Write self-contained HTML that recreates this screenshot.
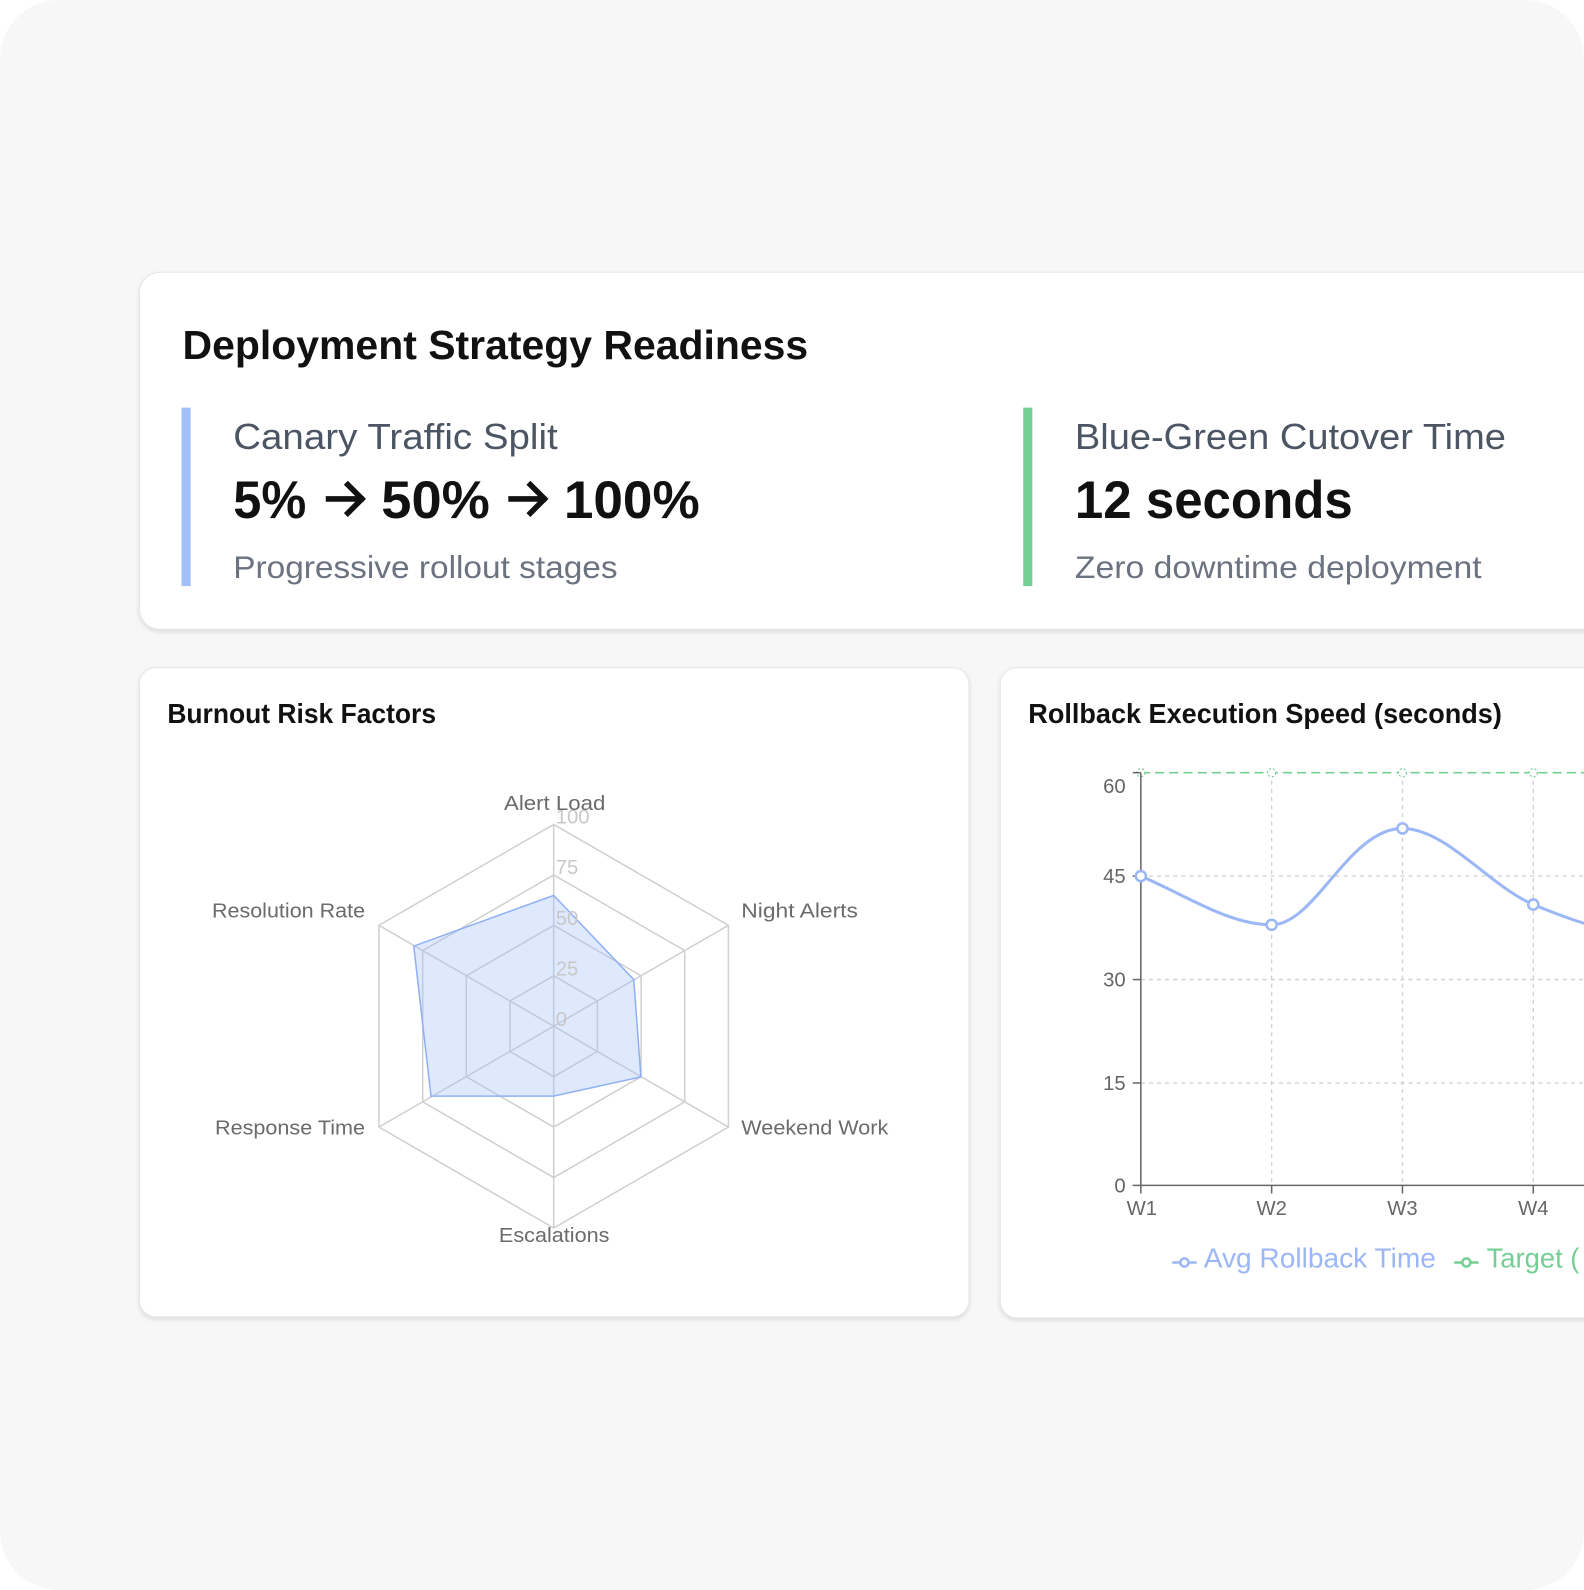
<!DOCTYPE html>
<html><head><meta charset="utf-8"><style>
html,body{margin:0;padding:0;background:#fff;width:1584px;height:1590px;overflow:hidden}
svg{display:block}
text{font-family:"Liberation Sans",sans-serif}
</style></head><body>
<svg width="1584" height="1590" viewBox="0 0 1562 1568" preserveAspectRatio="none" xmlns="http://www.w3.org/2000/svg">
<defs>
<clipPath id="frame"><rect x="0" y="0" width="1562" height="1568" rx="58"/></clipPath>
<filter id="sh" x="-5%" y="-10%" width="110%" height="125%"><feDropShadow dx="0" dy="2" stdDeviation="2" flood-color="#000" flood-opacity="0.12"/></filter>
</defs>
<g clip-path="url(#frame)">
<rect x="0" y="0" width="1562" height="1568" fill="#f7f7f7"/>
<rect x="137.5" y="268.5" width="1480" height="352" rx="20" fill="#fff" stroke="#e6e6e6" filter="url(#sh)"/>
<text x="180" y="354" font-size="40" font-weight="bold" fill="#111" textLength="617" lengthAdjust="spacingAndGlyphs">Deployment Strategy Readiness</text>
<rect x="179" y="402" width="9" height="176" fill="#a3bffa"/>
<text x="230" y="443" font-size="36" fill="#4b5563" textLength="320" lengthAdjust="spacingAndGlyphs">Canary Traffic Split</text>
<g font-size="52" font-weight="bold" fill="#111">
<text x="230" y="511" textLength="72" lengthAdjust="spacingAndGlyphs">5%</text>
<text x="376" y="511" textLength="107" lengthAdjust="spacingAndGlyphs">50%</text>
<text x="556" y="511" textLength="134" lengthAdjust="spacingAndGlyphs">100%</text>
</g>
<g fill="none" stroke="#111" stroke-width="5.5" stroke-linecap="square">
<path d="M324,492 H356 M343,478 L357,492 L343,506"/>
<path d="M504,492 H536 M523,478 L537,492 L523,506"/>
</g>
<text x="230" y="570" font-size="31" fill="#6b7280" textLength="379" lengthAdjust="spacingAndGlyphs">Progressive rollout stages</text>
<rect x="1009" y="402" width="9" height="176" fill="#74cf94"/>
<text x="1060" y="443" font-size="36" fill="#4b5563" textLength="425" lengthAdjust="spacingAndGlyphs">Blue-Green Cutover Time</text>
<text x="1060" y="511" font-size="52" font-weight="bold" fill="#111" textLength="274" lengthAdjust="spacingAndGlyphs">12 seconds</text>
<text x="1060" y="570" font-size="31" fill="#6b7280" textLength="401" lengthAdjust="spacingAndGlyphs">Zero downtime deployment</text>

<rect x="137.5" y="658.5" width="818" height="640" rx="16" fill="#fff" stroke="#e6e6e6" filter="url(#sh)"/>
<text x="165" y="713" font-size="27" font-weight="bold" fill="#111" textLength="265" lengthAdjust="spacingAndGlyphs">Burnout Risk Factors</text>
<g fill="none" stroke="#d0d0d0" stroke-width="1.5">
<polygon points="546,813 718.3,912.5 718.3,1111.5 546,1211 373.7,1111.5 373.7,912.5"/>
<polygon points="546,862.8 675.2,937.4 675.2,1086.6 546,1161.3 416.8,1086.6 416.8,937.4"/>
<polygon points="546,912.5 632.2,962.3 632.2,1061.8 546,1111.5 459.8,1061.8 459.8,962.3"/>
<polygon points="546,962.3 589.1,987.1 589.1,1036.9 546,1061.8 502.9,1036.9 502.9,987.1"/>
<line x1="546" y1="1012" x2="546" y2="813"/><line x1="546" y1="1012" x2="718.3" y2="912.5"/>
<line x1="546" y1="1012" x2="718.3" y2="1111.5"/><line x1="546" y1="1012" x2="546" y2="1211"/>
<line x1="546" y1="1012" x2="373.7" y2="1111.5"/><line x1="546" y1="1012" x2="373.7" y2="912.5"/>
</g>
<polygon points="546,883 625,966 632,1062 546,1081 425,1081 408,933" fill="#a3bffa" fill-opacity="0.35" stroke="#8fb0f5" stroke-width="1.5"/>
<g font-size="20" fill="#c8c8c8">
<text x="548" y="812">100</text><text x="548" y="862">75</text><text x="548" y="912">50</text><text x="548" y="962">25</text><text x="548" y="1012">0</text>
</g>
<g font-size="20" fill="#6b6b6b">
<text x="497" y="799" textLength="100" lengthAdjust="spacingAndGlyphs">Alert Load</text>
<text x="731" y="905" textLength="115" lengthAdjust="spacingAndGlyphs">Night Alerts</text>
<text x="731" y="1119" textLength="145" lengthAdjust="spacingAndGlyphs">Weekend Work</text>
<text x="492" y="1225" textLength="109" lengthAdjust="spacingAndGlyphs">Escalations</text>
<text x="212" y="1119" textLength="148" lengthAdjust="spacingAndGlyphs">Response Time</text>
<text x="209" y="905" textLength="151" lengthAdjust="spacingAndGlyphs">Resolution Rate</text>
</g>

<rect x="986.5" y="658.5" width="700" height="641" rx="16" fill="#fff" stroke="#e6e6e6" filter="url(#sh)"/>
<text x="1014" y="713" font-size="27" font-weight="bold" fill="#111" textLength="467" lengthAdjust="spacingAndGlyphs">Rollback Execution Speed (seconds)</text>
<g stroke="#cfcfcf" stroke-width="1.3" stroke-dasharray="4 4" fill="none">
<line x1="1125" y1="864" x2="1600" y2="864"/><line x1="1125" y1="966" x2="1600" y2="966"/><line x1="1125" y1="1068" x2="1600" y2="1068"/>
<line x1="1254" y1="762" x2="1254" y2="1169"/><line x1="1383" y1="762" x2="1383" y2="1169"/><line x1="1512" y1="762" x2="1512" y2="1169"/>
</g>
<line x1="1125" y1="762" x2="1600" y2="762" stroke="#74cf94" stroke-width="1.5" stroke-dasharray="9 5"/>
<g fill="#fff" stroke="#74cf94" stroke-width="1.2" stroke-dasharray="2 2">
<circle cx="1125" cy="762" r="4"/><circle cx="1254" cy="762" r="4"/><circle cx="1383" cy="762" r="4"/><circle cx="1512" cy="762" r="4"/>
</g>
<g stroke="#666" stroke-width="1.5" fill="none">
<line x1="1125" y1="762" x2="1125" y2="1169"/><line x1="1125" y1="1169" x2="1600" y2="1169"/>
<line x1="1117" y1="864" x2="1125" y2="864"/><line x1="1117" y1="966" x2="1125" y2="966"/><line x1="1117" y1="1068" x2="1125" y2="1068"/><line x1="1117" y1="1169" x2="1125" y2="1169"/><line x1="1117" y1="762" x2="1125" y2="762"/>
<line x1="1125" y1="1169" x2="1125" y2="1177"/><line x1="1254" y1="1169" x2="1254" y2="1177"/><line x1="1383" y1="1169" x2="1383" y2="1177"/><line x1="1512" y1="1169" x2="1512" y2="1177"/>
</g>
<g font-size="20" fill="#666" text-anchor="end">
<text x="1110" y="782">60</text><text x="1110" y="871">45</text><text x="1110" y="973">30</text><text x="1110" y="1075">15</text><text x="1110" y="1176">0</text>
</g>
<g font-size="20" fill="#666" text-anchor="middle">
<text x="1126" y="1198">W1</text><text x="1254" y="1198">W2</text><text x="1383" y="1198">W3</text><text x="1512" y="1198">W4</text>
</g>
<path d="M1125,864 C1168,882 1211,912 1254,912 C1297,912 1330,817 1383,817 C1426,817 1469,874 1512,892 C1555,910 1598,924 1641,924" fill="none" stroke="#9bb7f5" stroke-width="3"/>
<g fill="#fff" stroke="#9bb7f5" stroke-width="2.5">
<circle cx="1125" cy="864" r="5"/><circle cx="1254" cy="912" r="5"/><circle cx="1383" cy="817" r="5"/><circle cx="1512" cy="892" r="5"/>
</g>
<line x1="1156" y1="1245" x2="1180" y2="1245" stroke="#9bb7f5" stroke-width="2.5"/>
<circle cx="1168" cy="1245" r="4" fill="#fff" stroke="#9bb7f5" stroke-width="2.5"/>
<text x="1187" y="1250" font-size="27" fill="#9bb7f5" textLength="229" lengthAdjust="spacingAndGlyphs">Avg Rollback Time</text>
<line x1="1434" y1="1245" x2="1458" y2="1245" stroke="#74cf94" stroke-width="2.5"/>
<circle cx="1446" cy="1245" r="4" fill="#fff" stroke="#74cf94" stroke-width="2.5"/>
<text x="1466" y="1250" font-size="27" fill="#74cf94">Target (</text>
</g>
</svg>
</body></html>
